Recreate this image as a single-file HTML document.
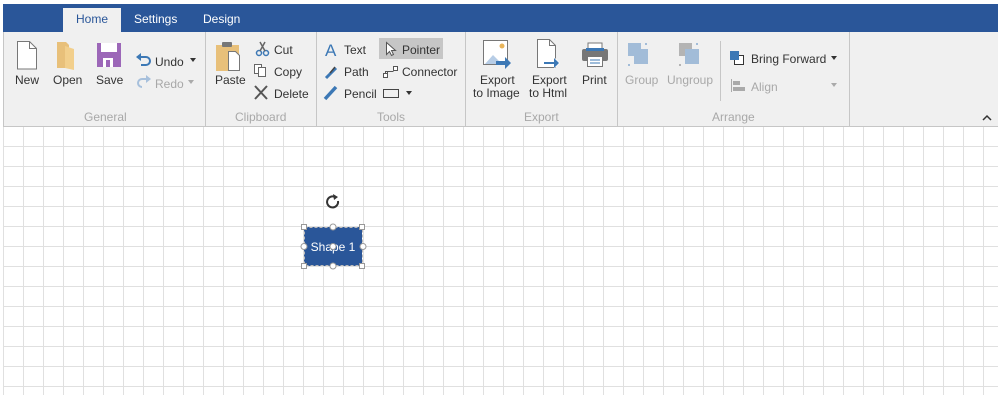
<!DOCTYPE html>
<html><head><meta charset="utf-8"><style>
body{margin:0;width:998px;height:402px;background:#fff;position:relative;overflow:hidden;font-family:"Liberation Sans",sans-serif;font-size:12px;color:#333}
.a{position:absolute;white-space:nowrap}
.g{color:#a8a8a8}
.lbl{color:#a8a8a8;position:absolute;top:110px;white-space:nowrap}
.sep{position:absolute;top:32px;width:1px;height:94px;background:#c6c6c6}
svg{position:absolute}
</style></head><body>
<div class="a" style="left:3px;top:4px;width:995px;height:28px;background:#2a5699"></div>
<div class="a" style="left:63px;top:8px;width:58px;height:24px;background:#f0f0f0"></div>
<div class="a" style="left:76px;top:12px;color:#2a5699">Home</div>
<div class="a" style="left:134px;top:12px;color:#fff">Settings</div>
<div class="a" style="left:203px;top:12px;color:#fff">Design</div>
<div class="a" style="left:3px;top:32px;width:994px;height:94px;background:#f0f0f0;border-left:1px solid #c6c6c6;border-bottom:1px solid #c6c6c6"></div>
<div class="sep" style="left:205px"></div><div class="sep" style="left:316px"></div><div class="sep" style="left:465px"></div><div class="sep" style="left:617px"></div><div class="sep" style="left:849px"></div>
<div class="a" style="left:720px;top:41px;width:1px;height:60px;background:#c6c6c6"></div>

<svg width="998" height="127" style="left:0;top:0">
<!-- New -->
<path d="M17.5 41.5h12l7 7v20.5h-19z" fill="#fff" stroke="#777"/><path d="M29.5 41.5v7h7" fill="none" stroke="#777"/>
<!-- Open -->
<path d="M57 42h9l3 3v23h-12z" fill="#e8c07a"/><path d="M65 46l9 3v21l-9-2z" fill="#f2cf8c"/>
<!-- Save -->
<rect x="97" y="43" width="24" height="24" fill="#9c67b8"/><rect x="101" y="43" width="16" height="9" fill="#fff"/><rect x="103" y="58" width="10" height="9" fill="#fff"/><rect x="106" y="60" width="4" height="7" fill="#9c67b8"/>
<!-- Undo/Redo -->
<path d="M139 57h7a4 4 0 0 1 0 8h-5" fill="none" stroke="#3c78b5" stroke-width="2"/><path d="M136 57l5-4v8z" fill="#3c78b5"/>
<path d="M148 79h-6a4 4 0 0 0 0 8" fill="none" stroke="#a7c0dc" stroke-width="2"/><path d="M151 79l-5-4v8z" fill="#a7c0dc"/>
<path d="M190 58h6l-3 4z" fill="#333"/><path d="M188 80h6l-3 4z" fill="#aaa"/>
<!-- Paste -->
<rect x="216" y="45" width="23" height="26" fill="#e8c07a"/><rect x="222" y="42" width="10" height="5" rx="1" fill="#777"/>
<path d="M228.5 51.5h7l4 4v15h-11z" fill="#fff" stroke="#777"/>
<!-- cut copy delete -->
<circle cx="259" cy="53" r="2.5" fill="none" stroke="#3c78b5" stroke-width="1.5"/><circle cx="266" cy="53" r="2.5" fill="none" stroke="#3c78b5" stroke-width="1.5"/><path d="M260 51l5-9M265 51l-5-9" stroke="#666" stroke-width="1.5"/>
<rect x="254.5" y="64.5" width="7" height="9" fill="#fff" stroke="#666"/><rect x="258.5" y="67.5" width="7" height="9" fill="#fff" stroke="#666"/>
<path d="M255 86l12 13M267 86l-12 13" stroke="#555" stroke-width="2"/>
<!-- Text A -->
<text x="325" y="56" font-family="Liberation Sans" font-size="17" fill="#3c78b5">A</text>
<path d="M326 78l7-7M333 71l3-3" stroke="#3c78b5" stroke-width="3"/><path d="M330 73l5-6" stroke="#444" stroke-width="1.5"/>
<path d="M325 99l11-12" stroke="#3c78b5" stroke-width="3.5"/>
<rect x="379" y="38" width="64" height="21" fill="#c6c6c6"/>
<path d="M386.5 42.5v12l3-3 2 4 2-1-2-4h4z" fill="#fff" stroke="#555"/>
<path d="M383.5 76.5h4v-5h6M387.5 73.5" fill="none" stroke="#555"/><rect x="383.5" y="73.5" width="4" height="4" fill="#fff" stroke="#555"/><rect x="393.5" y="66.5" width="4" height="4" fill="#fff" stroke="#555"/><path d="M385.5 73.5v-2h8" fill="none" stroke="#555"/>
<rect x="383.5" y="89.5" width="15" height="8" fill="none" stroke="#444"/><path d="M406 91h6l-3 4z" fill="#333"/>
<!-- Export image -->
<rect x="483.5" y="40.5" width="24" height="24" fill="#fff" stroke="#777"/><circle cx="502" cy="46" r="2.5" fill="#e8b45a"/><path d="M485 64l8-9 9 9z" fill="#b7cde6"/>
<path d="M496 61h9v-4l6 6-6 6v-4h-9z" fill="#3c78b5"/>
<!-- Export html -->
<path d="M537.5 39.5h12l6 6v22h-18z" fill="#fff" stroke="#777"/><path d="M549.5 39.5v6h6" fill="none" stroke="#777"/>
<path d="M545 61h9v-4l6 6-6 6v-4h-9z" fill="#fff"/><path d="M544 62h10v-4l5 5-5 5v-4h-10z" fill="#3c78b5"/>
<!-- Print -->
<rect x="588" y="43" width="14" height="7" fill="#fff" stroke="#777"/><rect x="582" y="49" width="26" height="12" rx="2" fill="#777"/><rect x="586" y="48" width="18" height="3" fill="#3c78b5"/><rect x="587.5" y="56.5" width="15" height="10" fill="#fff" stroke="#777"/><path d="M590 60h10M590 63h10" stroke="#3c78b5"/>
<!-- Group -->
<rect x="628" y="43" width="13" height="13" fill="#a2bcd8"/><rect x="634" y="49" width="14" height="15" fill="#a2bcd8"/><rect x="645" y="43" width="2" height="2" fill="#a2bcd8"/><rect x="628" y="64" width="2" height="2" fill="#a2bcd8"/>
<!-- Ungroup -->
<rect x="679" y="43" width="13" height="13" fill="#b4b4b4"/><rect x="685" y="49" width="14" height="15" fill="#a2bcd8"/><rect x="696" y="43" width="2" height="2" fill="#a2bcd8"/><rect x="679" y="64" width="2" height="2" fill="#b4b4b4"/>
<!-- Bring forward -->
<rect x="734.5" y="55.5" width="9" height="9" fill="#fff" stroke="#333"/><rect x="730" y="51" width="9" height="9" fill="#3c78b5"/>
<path d="M831 56h6l-3 4z" fill="#333"/>
<path d="M731.5 79v13" stroke="#aaa"/><rect x="733" y="81" width="7" height="4" fill="#aaa"/><rect x="733" y="87" width="12" height="4" fill="#aaa"/>
<path d="M831 83h6l-3 4z" fill="#aaa"/>
<path d="M983 120l4-4 4 4" fill="none" stroke="#333" stroke-width="1.5"/>
</svg>

<div class="a" style="left:15px;top:73px">New</div>
<div class="a" style="left:53px;top:73px">Open</div>
<div class="a" style="left:96px;top:73px">Save</div>
<div class="a" style="left:155px;top:55px">Undo</div>
<div class="a g" style="left:155px;top:77px">Redo</div>
<div class="lbl" style="left:84px">General</div>
<div class="a" style="left:215px;top:73px">Paste</div>
<div class="a" style="left:274px;top:43px">Cut</div>
<div class="a" style="left:274px;top:65px">Copy</div>
<div class="a" style="left:274px;top:87px">Delete</div>
<div class="lbl" style="left:235px">Clipboard</div>
<div class="a" style="left:344px;top:43px">Text</div>
<div class="a" style="left:344px;top:65px">Path</div>
<div class="a" style="left:344px;top:87px">Pencil</div>
<div class="a" style="left:402px;top:43px">Pointer</div>
<div class="a" style="left:402px;top:65px">Connector</div>
<div class="lbl" style="left:377px">Tools</div>
<div class="a" style="left:480px;top:73px">Export</div>
<div class="a" style="left:473px;top:86px">to Image</div>
<div class="a" style="left:532px;top:73px">Export</div>
<div class="a" style="left:529px;top:86px">to Html</div>
<div class="a" style="left:582px;top:73px">Print</div>
<div class="lbl" style="left:524px">Export</div>
<div class="a g" style="left:625px;top:73px">Group</div>
<div class="a g" style="left:667px;top:73px">Ungroup</div>
<div class="a" style="left:751px;top:52px">Bring Forward</div>
<div class="a g" style="left:751px;top:80px">Align</div>
<div class="lbl" style="left:712px">Arrange</div>

<svg width="998" height="402" style="left:0;top:0;z-index:-1">
<defs><pattern id="p" x="3" y="6" width="20" height="20" patternUnits="userSpaceOnUse"><path d="M0.5 0v20M0 0.5h20" stroke="#e0e0e0" fill="none"/></pattern></defs>
<rect x="3" y="127" width="995" height="268" fill="url(#p)"/>
</svg>

<svg width="998" height="402" style="left:0;top:0">
<rect x="304" y="227" width="58" height="39" fill="#2a5699"/>
<rect x="304.5" y="227.5" width="58" height="38" fill="none" stroke="#bbb" stroke-dasharray="3 2"/>
<text x="333" y="251" font-family="Liberation Sans" font-size="12" fill="#fff" text-anchor="middle">Shape 1</text>
<g fill="#fff" stroke="#999"><rect x="301.5" y="224.5" width="5" height="5"/><rect x="359.5" y="224.5" width="5" height="5"/><rect x="301.5" y="263.5" width="5" height="5"/><rect x="359.5" y="263.5" width="5" height="5"/>
<circle cx="333" cy="227" r="3"/><circle cx="333" cy="266" r="3"/><circle cx="304" cy="246.5" r="3"/><circle cx="363" cy="246.5" r="3"/><circle cx="333" cy="246.5" r="3"/></g>
<path d="M338 201a5.5 5.5 0 1 1-3-4" fill="none" stroke="#333" stroke-width="2"/><path d="M333 194l5 3-4 3z" fill="#333"/>
</svg>
</body></html>
